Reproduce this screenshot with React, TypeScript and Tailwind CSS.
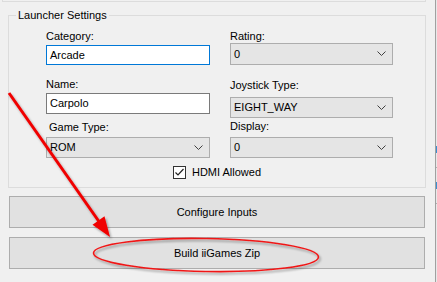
const font = { fontFamily: '"Liberation Sans", Arial, sans-serif' };

function Chevron() {
  return (
    <svg width="9" height="6" viewBox="0 0 9 6" className="shrink-0">
      <polyline points="0.5 0.5 4.5 4.5 8.5 0.5" fill="none" stroke="#404040" strokeWidth="1" />
    </svg>
  );
}

function Combo({ value, className = "" }: { value: string; className?: string }) {
  return (
    <div
      className={`flex items-center justify-between h-[21px] bg-[#e5e5e5] border border-[#adadad] pl-[3px] pr-[6px] text-[11px] text-black ${className}`}
    >
      <span>{value}</span>
      <Chevron />
    </div>
  );
}

function TextBox({ value, focused, className = "" }: { value: string; focused?: boolean; className?: string }) {
  return (
    <div
      className={`flex items-center bg-white border pl-[3px] text-[11px] text-black ${
        focused ? "border-[#0078d7]" : "border-[#7a7a7a]"
      } ${className}`}
    >
      {value}
    </div>
  );
}

function Label({ text, className = "" }: { text: string; className?: string }) {
  return <div className={`h-[14px] leading-[14px] text-[11px] text-black ${className}`}>{text}</div>;
}

function WinButton({ label, className = "" }: { label: string; className?: string }) {
  return (
    <div
      className={`ml-[9px] w-[416px] h-[32px] bg-[#e1e1e1] border border-[#adadad] flex items-center justify-center text-[11px] text-black ${className}`}
    >
      {label}
    </div>
  );
}

export default function App() {
  return (
    <div className="relative w-[437px] h-[282px] bg-[#f0f0f0] overflow-hidden flex" style={font}>
      <div className="w-[435px] shrink-0 flex flex-col">
        {/* bottom edge of the group above */}
        <div className="ml-[2px] w-[424px] h-[2px] border-l border-r border-b border-[#dcdcdc]" />

        {/* Launcher Settings group */}
        <div className="relative mt-[13px] ml-[8px] w-[418px] h-[173px] border border-[#dcdcdc] pl-[37px]">
          <span className="absolute -top-[8px] left-[7px] px-[2px] bg-[#f0f0f0] text-[11px] leading-[14px] text-black">
            Launcher Settings
          </span>

          <div className="flex gap-[20px]">
            <div className="w-[164px] flex flex-col">
              <Label text="Category:" className="mt-[13px]" />
              <TextBox value="Arcade" focused className="mt-[2px] h-[20px]" />
              <Label text="Name:" className="mt-[12px]" />
              <TextBox value="Carpolo" className="mt-[2px] h-[21px]" />
              <Label text="Game Type:" className="mt-[6px] ml-[3px]" />
              <Combo value="ROM" className="mt-[3px]" />
            </div>
            <div className="w-[163px] flex flex-col">
              <Label text="Rating:" className="mt-[13px]" />
              <Combo value="0" className="h-[22px]" />
              <Label text="Joystick Type:" className="mt-[13px]" />
              <Combo value="EIGHT_WAY" className="mt-[5px]" />
              <Label text="Display:" className="mt-[1px]" />
              <Combo value="0" className="mt-[4px]" />
            </div>
          </div>

          <div className="-ml-[37px] mt-[7px] flex items-center justify-center gap-[6px]">
            <div className="w-[13px] h-[13px] border border-[#333333] bg-white flex items-center justify-center">
              <svg width="11" height="11" viewBox="0 0 11 11">
                <polyline points="1.5 5.5 4 8 9.5 2" fill="none" stroke="#222222" strokeWidth="1.2" />
              </svg>
            </div>
            <span className="text-[11px] leading-[14px] text-black">HDMI Allowed</span>
          </div>
        </div>

        <WinButton label="Configure Inputs" className="mt-[8px]" />
        <WinButton label="Build iiGames Zip" className="mt-[9px]" />
      </div>

      {/* neighbouring window edge */}
      <div className="w-[2px] border-l border-[#a0a0a0] bg-[#e8e8e8] flex flex-col">
        <div className="h-[146px]" />
        <div className="h-[7px] bg-[#3c8fd0]" />
        <div className="h-[15px] border-b border-[#b0b0b0]" />
        <div className="h-[14px]" />
        <div className="h-[7px] bg-[#3c8fd0]" />
        <div className="h-[15px] border-b border-[#b0b0b0]" />
      </div>

      {/* annotation overlay */}
      <svg className="absolute inset-0 pointer-events-none" width="437" height="282" viewBox="0 0 437 282">
        <defs>
          <filter id="sh" x="-20%" y="-20%" width="140%" height="140%">
            <feDropShadow dx="1.5" dy="2" stdDeviation="1.2" floodColor="#000" floodOpacity="0.35" />
          </filter>
        </defs>
        <g filter="url(#sh)">
          <ellipse
            cx="206"
            cy="255"
            rx="112.5"
            ry="16.5"
            transform="rotate(1 206 255)"
            fill="none"
            stroke="#f01818"
            strokeWidth="1.6"
          />
          <line x1="9" y1="93" x2="100" y2="223" stroke="#f00000" strokeWidth="3" />
          <polygon points="110,237 92.5,224.8 104.5,216.3" fill="#f00000" />
        </g>
      </svg>
    </div>
  );
}
